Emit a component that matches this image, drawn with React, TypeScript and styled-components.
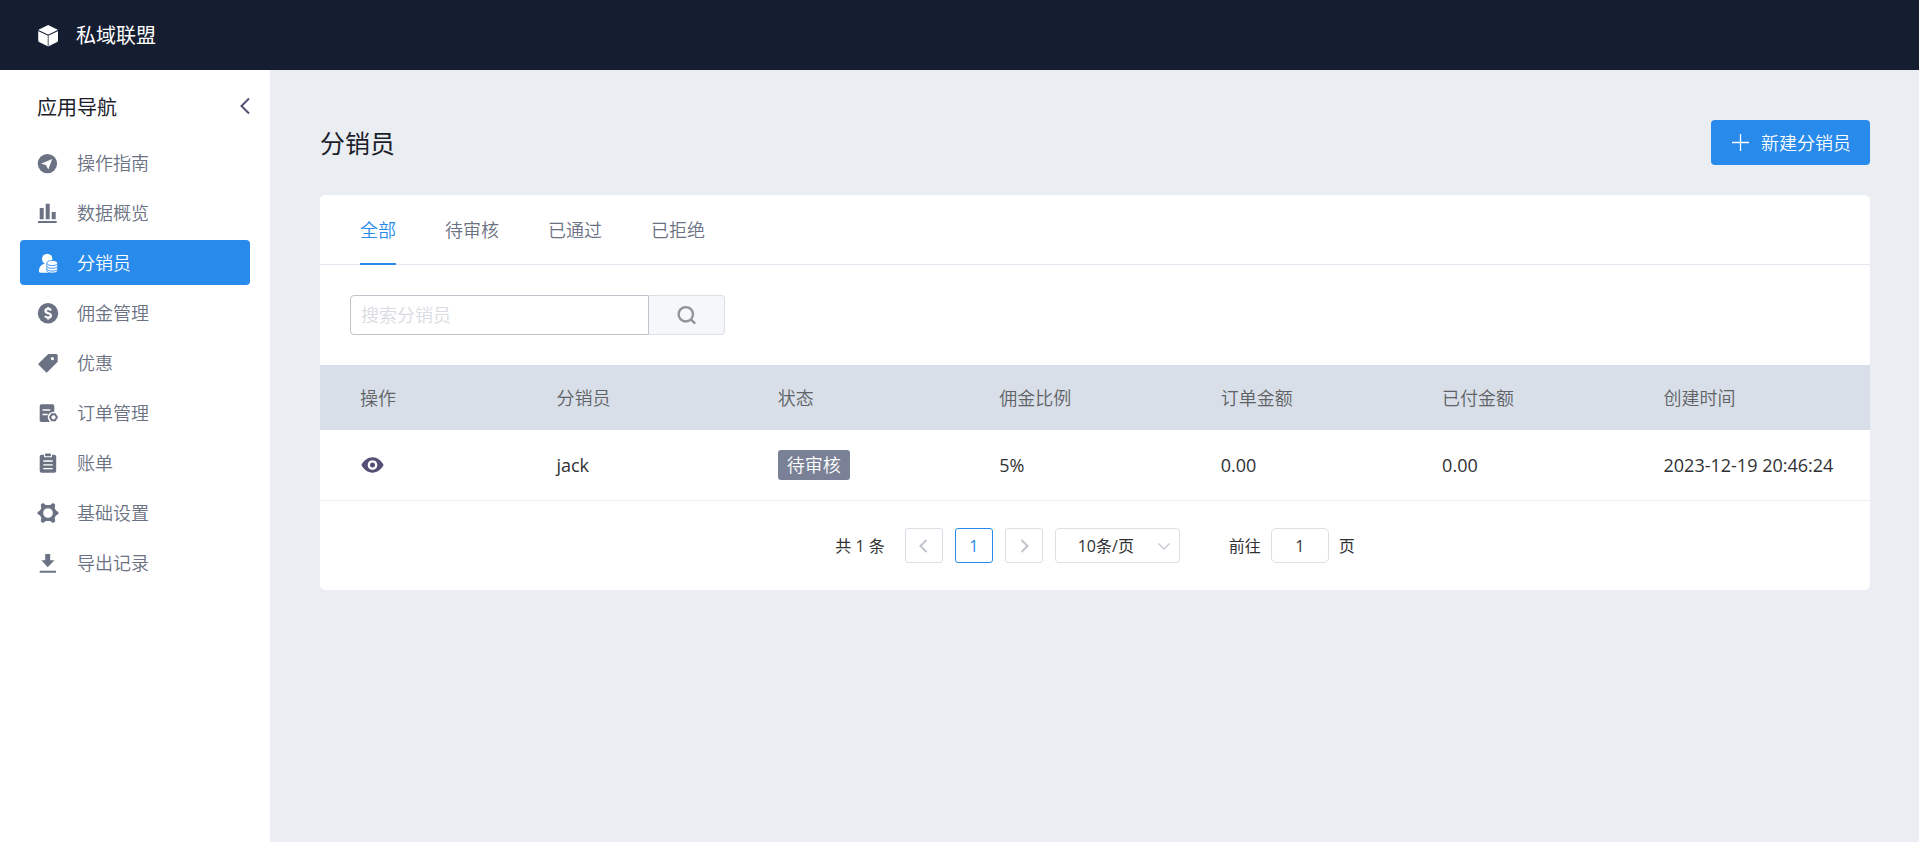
import React, { useState } from "react";
import styled, { createGlobalStyle } from "styled-components";

const color = {
  navy: "#151d31",
  blue: "#288aeb",
  page: "#eaedf2",
  line: "#e3e6ee",
  control: "#dcdfe6",
  muted: "#6b7283",
  ink: "#1d1e2c",
  text: "#303133",
};

const GlobalStyle = createGlobalStyle`
  *, *::before, *::after { box-sizing: border-box; }
  body {
    margin: 0;
    background: ${color.page};
    color: ${color.text};
    font: 18px/28px "Open Sans", "Noto Sans CJK SC", sans-serif;
  }
  button, input, select { font: inherit; color: inherit; margin: 0; }
  button { cursor: pointer; }
  svg { display: block; flex: none; }
`;

const TopBar = styled.header`
  display: flex;
  align-items: center;
  gap: 17px;
  height: 70px;
  padding: 0 36px;
  background: ${color.navy};
  color: #fff;
  font-size: 20px;
`;

const BrandName = styled.span`
  padding-top: 2px;
`;

const Shell = styled.div`
  display: flex;
  min-height: calc(100vh - 70px);
`;

const Sidebar = styled.aside`
  flex: none;
  width: 270px;
  padding: 0 16px 0 20px;
  background: #fff;
`;

const SidebarHead = styled.div`
  display: flex;
  justify-content: space-between;
  padding: 23px 0 17px 17px;
`;

const SidebarTitle = styled.h2`
  margin: 0;
  color: ${color.ink};
  font-size: 20px;
  font-weight: 400;
  line-height: 30px;
`;

const CollapseButton = styled.button`
  display: flex;
  align-items: center;
  height: 26px;
  padding: 0;
  border: 0;
  background: none;
  color: #554f76;
`;

const NavList = styled.nav`
  display: flex;
  flex-direction: column;
  gap: 5px;
  margin-right: 4px;
`;

const NavItem = styled.a<{ $active?: boolean }>`
  display: flex;
  align-items: center;
  gap: 18px;
  height: 45px;
  padding: 0 16px;
  border-radius: 4px;
  background: ${(p) => (p.$active ? color.blue : "transparent")};
  color: ${(p) => (p.$active ? "#fff" : color.muted)};
  font-weight: 350;
  text-decoration: none;
`;

const Main = styled.main`
  flex: 1;
  min-width: 0;
  padding: 50px 49px 50px 50px;
`;

const PageHead = styled.div`
  display: flex;
  align-items: center;
  justify-content: space-between;
  margin-bottom: 30px;
`;

const PageTitle = styled.h1`
  margin: 0;
  color: ${color.ink};
  font-size: 25px;
  font-weight: 400;
  line-height: 36px;
`;

const PrimaryButton = styled.button`
  display: flex;
  align-items: center;
  gap: 11px;
  height: 45px;
  padding: 0 19px 0 20px;
  border: 0;
  border-radius: 4px;
  background: ${color.blue};
  color: #fff;
  font-weight: 350;
`;

const Card = styled.section`
  overflow: hidden;
  border-radius: 5px;
  background: #fff;
`;

const TabBar = styled.div`
  display: flex;
  gap: 49px;
  height: 70px;
  padding: 0 40px;
  box-shadow: inset 0 -1px ${color.line};
`;

const Tab = styled.button<{ $active: boolean }>`
  padding: 0;
  border: 0;
  background: none;
  box-shadow: ${(p) => (p.$active ? `inset 0 -2px ${color.blue}` : "none")};
  color: ${(p) => (p.$active ? color.blue : color.muted)};
  font-weight: 350;
`;

const SearchForm = styled.form`
  display: flex;
  padding: 30px;
`;

const SearchInput = styled.input`
  width: 299px;
  height: 40px;
  padding: 0 10px;
  border: 1px solid #c0c4cc;
  border-radius: 4px 0 0 4px;
  outline: 0;
  font-weight: 350;
  &::placeholder { color: #d8dbe2; opacity: 1; }
`;

const SearchButton = styled.button`
  display: flex;
  align-items: center;
  justify-content: center;
  width: 76px;
  height: 40px;
  border: 1px solid ${color.control};
  border-left: 0;
  border-radius: 0 4px 4px 0;
  background: #f5f7fa;
  color: #909399;
`;

const Table = styled.table`
  width: 100%;
  border-collapse: separate;
  border-spacing: 0;
  table-layout: fixed;
  text-align: left;
`;

const HeadCell = styled.th`
  height: 65px;
  padding: 0 0 0 15px;
  background: #d8dfe8;
  color: #606266;
  font-weight: 350;
  &:first-child { padding-left: 40px; }
`;

const Cell = styled.td`
  height: 71px;
  padding: 0 0 0 15px;
  border-bottom: 1px solid #ebeef5;
  white-space: nowrap;
  &:first-child { padding-left: 40px; }
`;

const IconButton = styled.button`
  display: flex;
  padding: 0;
  border: 0;
  background: none;
  color: #554f76;
`;

const Tag = styled.div`
  width: fit-content;
  padding: 0 9px;
  border-radius: 3px;
  background: #7a8196;
  color: #fff;
  font-weight: 350;
  line-height: 30px;
`;

const Pagination = styled.nav`
  display: flex;
  align-items: center;
  justify-content: center;
  gap: 12px;
  padding: 27px 20px;
  font-size: 16px;
  line-height: 24px;
`;

const Total = styled.span`
  margin-right: 8px;
`;

const PageButton = styled.button<{ $current?: boolean }>`
  display: flex;
  align-items: center;
  justify-content: center;
  width: 38px;
  height: 35px;
  padding: 0;
  border: 1px solid ${(p) => (p.$current ? color.blue : color.control)};
  border-radius: 3px;
  background: #fff;
  color: ${(p) => (p.$current ? color.blue : "#c0c4cc")};
`;

const SizePicker = styled.div`
  display: grid;
  align-items: center;
  width: 125px;
  margin-right: 37px;
  > * { grid-area: 1 / 1; }
  svg {
    justify-self: end;
    margin-right: 7px;
    color: #c0c4cc;
    pointer-events: none;
  }
`;

const SizeSelect = styled.select`
  width: 100%;
  height: 35px;
  padding: 0 22px;
  border: 1px solid ${color.control};
  border-radius: 4px;
  background: #fff;
  appearance: none;
`;

const Jumper = styled.label`
  display: flex;
  align-items: center;
  gap: 10px;
`;

const JumpInput = styled.input`
  width: 58px;
  height: 35px;
  padding: 0;
  border: 1px solid ${color.control};
  border-radius: 5px;
  text-align: center;
`;

const NavIcon = ({ children }: { children: React.ReactNode }) => (
  <svg width="23" height="23" viewBox="0 0 23 23" fill="currentColor" aria-hidden="true">
    {children}
  </svg>
);

const CubeLogo = () => (
  <svg width="23" height="23" viewBox="0 0 23 23" aria-hidden="true">
    <path
      d="M12.2 1 L21.2 5.4 Q22 5.9 22 6.8 V16.6 Q22 17.4 21.2 17.9 L12.2 22.5 L3 17.9 Q2.2 17.4 2.2 16.6 V6.8 Q2.2 5.9 3 5.4 Z"
      fill="#fff"
    />
    <path d="M2.2 6.4 L12.2 11.2 L22 6.4" fill="none" stroke={color.navy} strokeWidth="1.1" />
    <path d="M12.2 11.2 V22.3" fill="none" stroke={color.navy} strokeWidth="1" opacity="0.75" />
  </svg>
);

const CompassIcon = () => (
  <NavIcon>
    <circle cx="11.4" cy="12.6" r="9.7" />
    <path d="M16.2 8 L5 12.8 L9.9 14.1 L12.3 18.4 Z" fill="#fff" />
  </NavIcon>
);

const ChartIcon = () => (
  <NavIcon>
    <path d="M3.700 7h4v11.300h-4zM9.700 2.700h4v15.600h-4zM15.700 11h4v7.300h-4zM2 20h18.700v2H2z" />
  </NavIcon>
);

const AgentIcon = () => (
  <NavIcon>
    <circle cx="11.2" cy="8" r="5.2" />
    <path d="M8 12.8 H14 V21.8 H4.5 Q2.7 21.8 2.8 19.8 C3.2 16 5 13.6 8 12.8 Z" />
    <path
      d="M10.8 12 C10.8 8.600 21.600 8.600 21.600 12 V19.500 C21.600 22.900 10.800 22.900 10.800 19.500 Z"
      stroke={color.blue}
      strokeWidth="0.8"
    />
    <path
      d="M11 12.600 C12 15.200 20.400 15.200 21.400 12.600 M11 15.500 C12 18 20.400 18 21.400 15.500 M11 18.200 C12 20.700 20.400 20.700 21.400 18.200"
      fill="none"
      stroke={color.blue}
      strokeWidth="0.9"
    />
  </NavIcon>
);

const DollarIcon = () => (
  <NavIcon>
    <circle cx="12" cy="12.2" r="10.2" />
    <path
      d="M15 9.400C14.400 8.200 13.300 7.900 12.200 7.900 10.600 7.900 9.500 8.700 9.500 10 9.500 11.400 10.800 11.800 12.200 12.200 13.800 12.700 14.900 13.200 14.900 14.500 14.900 15.900 13.700 16.600 12.100 16.600 10.800 16.600 9.700 16.200 9 15M12.200 6V8M12.200 16.600V18.600"
      fill="none"
      stroke="#fff"
      strokeWidth="2.2"
    />
  </NavIcon>
);

const PriceTagIcon = () => (
  <NavIcon>
    <path
      fillRule="evenodd"
      d="M12.3 3H20.2Q21.7 3 21.7 4.5V10.7L11.2 21.3Q10.6 21.9 10 21.3L2.6 13.7Q2 13 2.6 12.4ZM16.4 6.1a1.6 1.6 0 1 0 .01 0z"
    />
  </NavIcon>
);

const OrderIcon = () => (
  <NavIcon>
    <rect x="3.7" y="3.2" width="14.6" height="17.8" rx="1.8" />
    <path d="M6.5 8.9H14.2M6.5 13.5H11.7" stroke="#fff" strokeWidth="1.5" />
    <circle cx="17.4" cy="16.3" r="5.6" fill="#fff" />
    <path
      fillRule="evenodd"
      d="M15.3 12.3H19.5L22.1 16.3L19.5 20.3H15.3L12.9 16.3ZM17.5 14.2a2.1 2.1 0 1 0 .01 0z"
    />
  </NavIcon>
);

const ClipboardIcon = () => (
  <NavIcon>
    <rect x="3.7" y="3.8" width="16.5" height="18" rx="2" />
    <path d="M8 3V5.5Q8 6.3 8.8 6.3H15.2Q16 6.3 16 5.5V3" fill="#fff" />
    <rect x="9" y="2.5" width="6" height="2.7" rx="1" />
    <path d="M7.3 10H16.7M7.3 13.9H16.7M7.3 17.7H16.7" stroke="#fff" strokeWidth="1.3" />
  </NavIcon>
);

const GearIcon = () => (
  <NavIcon>
    <path
      fillRule="evenodd"
      d="M6.2 2.4 Q7 1.8 7.9 2.4 L9.7 3.9 H14.3 L16.1 2.4 Q17 1.8 17.8 2.4 L18.9 3.3 Q19.3 3.9 19.1 4.7 L18.7 7.3 L20 9.5 L22 10.7 Q22.6 11.3 22.6 12 Q22.6 12.7 22 13.3 L20 14.5 L18.7 16.7 L19.1 19.3 Q19.3 20.1 18.9 20.7 L17.8 21.6 Q17 22.2 16.1 21.6 L14.3 20.1 H9.7 L7.9 21.6 Q7 22.2 6.2 21.6 L5.1 20.7 Q4.7 20.1 4.9 19.3 L5.3 16.7 L4 14.5 L2 13.3 Q1.4 12.7 1.4 12 Q1.4 11.3 2 10.7 L4 9.5 L5.3 7.3 L4.9 4.7 Q4.7 3.9 5.1 3.3 Z M12 7.2a4.8 4.8 0 1 0 .01 0z"
    />
  </NavIcon>
);

const DownloadIcon = () => (
  <NavIcon>
    <path d="M9.2 3h5v6.2h4.3L11.7 16.3 5.4 9.2h3.8zM3.7 19.7H20v2H3.7z" />
  </NavIcon>
);

const EyeIcon = () => (
  <svg width="24" height="24" viewBox="0 0 24 24" fill="currentColor" aria-hidden="true">
    <path
      fillRule="evenodd"
      d="M12.5 4.300C17 4.300 21.500 7.600 23.600 12C21.500 16.400 17 19.700 12.500 19.700S3.500 16.400 1.400 12C3.500 7.600 8 4.300 12.500 4.300ZM12.500 7.200a4.800 4.800 0 1 0 .01 0z"
    />
    <circle cx="12.5" cy="12" r="2.500" />
  </svg>
);

const Chevron = ({ d, width }: { d: string; width: number }) => (
  <svg width="18" height="18" viewBox="0 0 18 18" fill="none" stroke="currentColor" strokeWidth={width} aria-hidden="true">
    <path d={d} />
  </svg>
);

const PlusIcon = () => (
  <svg width="19" height="19" viewBox="0 0 19 19" stroke="currentColor" strokeWidth="1.3" aria-hidden="true">
    <path d="M9.5 1V18M1 9.5H18" />
  </svg>
);

const SearchIcon = () => (
  <svg width="20" height="20" viewBox="0 0 20 20" fill="none" stroke="currentColor" strokeWidth="2.4" aria-hidden="true">
    <circle cx="8.8" cy="9.3" r="7.2" />
    <path d="M13.8 14.3L18.2 18.7" />
  </svg>
);

const navigation = [
  { label: "操作指南", Icon: CompassIcon },
  { label: "数据概览", Icon: ChartIcon },
  { label: "分销员", Icon: AgentIcon, active: true },
  { label: "佣金管理", Icon: DollarIcon },
  { label: "优惠", Icon: PriceTagIcon },
  { label: "订单管理", Icon: OrderIcon },
  { label: "账单", Icon: ClipboardIcon },
  { label: "基础设置", Icon: GearIcon },
  { label: "导出记录", Icon: DownloadIcon },
];

const tabs = ["全部", "待审核", "已通过", "已拒绝"];
const columns = ["操作", "分销员", "状态", "佣金比例", "订单金额", "已付金额", "创建时间"];
const rows = [
  { name: "jack", status: "待审核", rate: "5%", orders: "0.00", paid: "0.00", created: "2023-12-19 20:46:24" },
];

export default function App() {
  const [tab, setTab] = useState(tabs[0]);

  return (
    <>
      <GlobalStyle />
      <TopBar>
        <CubeLogo />
        <BrandName>私域联盟</BrandName>
      </TopBar>
      <Shell>
        <Sidebar>
          <SidebarHead>
            <SidebarTitle>应用导航</SidebarTitle>
            <CollapseButton type="button" aria-label="收起导航">
              <Chevron d="M13 1.500L5.500 9L13 16.500" width={2} />
            </CollapseButton>
          </SidebarHead>
          <NavList>
            {navigation.map(({ label, Icon, active }) => (
              <NavItem key={label} href="#" $active={active} aria-current={active ? "page" : undefined}>
                <Icon />
                <span>{label}</span>
              </NavItem>
            ))}
          </NavList>
        </Sidebar>
        <Main>
          <PageHead>
            <PageTitle>分销员</PageTitle>
            <PrimaryButton type="button">
              <PlusIcon />
              <span>新建分销员</span>
            </PrimaryButton>
          </PageHead>
          <Card>
            <TabBar role="tablist">
              {tabs.map((name) => (
                <Tab
                  key={name}
                  type="button"
                  role="tab"
                  aria-selected={name === tab}
                  $active={name === tab}
                  onClick={() => setTab(name)}
                >
                  {name}
                </Tab>
              ))}
            </TabBar>
            <SearchForm onSubmit={(e) => e.preventDefault()}>
              <SearchInput type="text" aria-label="搜索分销员" placeholder="搜索分销员" />
              <SearchButton type="submit" aria-label="搜索">
                <SearchIcon />
              </SearchButton>
            </SearchForm>
            <Table>
              <thead>
                <tr>
                  {columns.map((name) => (
                    <HeadCell key={name} scope="col">{name}</HeadCell>
                  ))}
                </tr>
              </thead>
              <tbody>
                {rows.map((row) => (
                  <tr key={row.name}>
                    <Cell>
                      <IconButton type="button" aria-label="查看">
                        <EyeIcon />
                      </IconButton>
                    </Cell>
                    <Cell>{row.name}</Cell>
                    <Cell><Tag>{row.status}</Tag></Cell>
                    <Cell>{row.rate}</Cell>
                    <Cell>{row.orders}</Cell>
                    <Cell>{row.paid}</Cell>
                    <Cell>{row.created}</Cell>
                  </tr>
                ))}
              </tbody>
            </Table>
            <Pagination aria-label="分页">
              <Total>共 1 条</Total>
              <PageButton type="button" aria-label="上一页">
                <Chevron d="M11.500 3L5.500 9L11.500 15" width={2} />
              </PageButton>
              <PageButton type="button" $current>1</PageButton>
              <PageButton type="button" aria-label="下一页">
                <Chevron d="M6.500 3L12.500 9L6.500 15" width={2} />
              </PageButton>
              <SizePicker>
                <SizeSelect aria-label="每页条数" defaultValue="10">
                  <option value="10">10条/页</option>
                  <option value="20">20条/页</option>
                  <option value="50">50条/页</option>
                </SizeSelect>
                <Chevron d="M3.500 6.500L9 12L14.500 6.500" width={1.2} />
              </SizePicker>
              <Jumper>
                前往
                <JumpInput type="text" inputMode="numeric" defaultValue="1" />
                <span>页</span>
              </Jumper>
            </Pagination>
          </Card>
        </Main>
      </Shell>
    </>
  );
}
